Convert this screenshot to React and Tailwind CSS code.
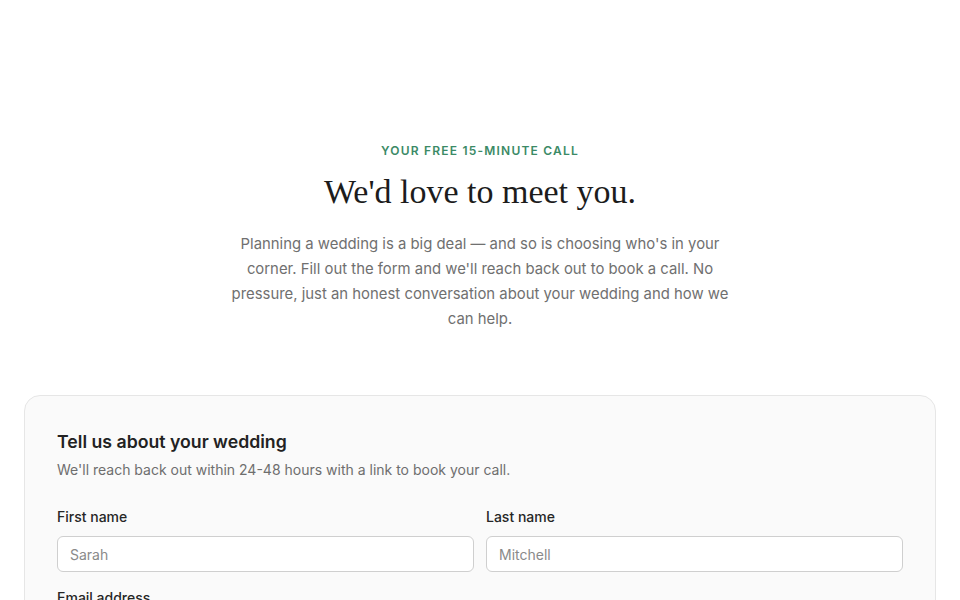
import React from "react";

export default function App() {
  return (
    <div className="min-h-screen bg-white px-6 pt-[143px] pb-16" style={{ fontFamily: "Inter, 'Noto Sans', sans-serif" }}>
      <div className="flex flex-col items-center text-center">
        <p className="text-[12px] leading-4 font-semibold tracking-[0.1em] text-[#3b8a66] uppercase">
          Your free 15-minute call
        </p>
        <h1
          className="mt-[11px] text-[34px] leading-[43px] text-[#1c1c1c]"
          style={{ fontFamily: "'Liberation Serif', 'DejaVu Serif', serif" }}
        >
          We'd love to meet you.
        </h1>
        <p className="mt-[19px] max-w-[500px] text-[14.88px] leading-[25px] text-[#707070]">
          Planning a wedding is a big deal — and so is choosing who's in your corner. Fill out the form and we'll reach back out to book a call. No pressure, just an honest conversation about your wedding and how we can help.
        </p>
      </div>

      <div className="mt-[63px] rounded-2xl border border-[#e6e6e6] bg-[#fafafa] p-8">
        <h2 className="text-[17.7px] leading-7 font-semibold text-[#222]">Tell us about your wedding</h2>
        <p className="mt-1 text-[14px] leading-5 text-[#6e6e6e]">
          We'll reach back out within 24-48 hours with a link to book your call.
        </p>

        <div className="mt-[27px] grid grid-cols-2 gap-3">
          <div className="flex flex-col">
            <label className="text-[14px] leading-5 font-medium text-[#262626]">First name</label>
            <div className="mt-[9px] flex h-9 items-center rounded-md border border-[#cfcfcf] bg-white px-3 text-[14px] text-[#8a8a8a]">
              Sarah
            </div>
          </div>
          <div className="flex flex-col">
            <label className="text-[14px] leading-5 font-medium text-[#262626]">Last name</label>
            <div className="mt-[9px] flex h-9 items-center rounded-md border border-[#cfcfcf] bg-white px-3 text-[14px] text-[#8a8a8a]">
              Mitchell
            </div>
          </div>
        </div>

        <div className="mt-4 flex flex-col">
          <label className="text-[14px] leading-5 font-medium text-[#262626]">Email address</label>
          <div className="mt-[9px] flex h-9 items-center rounded-md border border-[#cfcfcf] bg-white px-3 text-[14px] text-[#8a8a8a]">
            sarah@example.com
          </div>
        </div>
      </div>
    </div>
  );
}
